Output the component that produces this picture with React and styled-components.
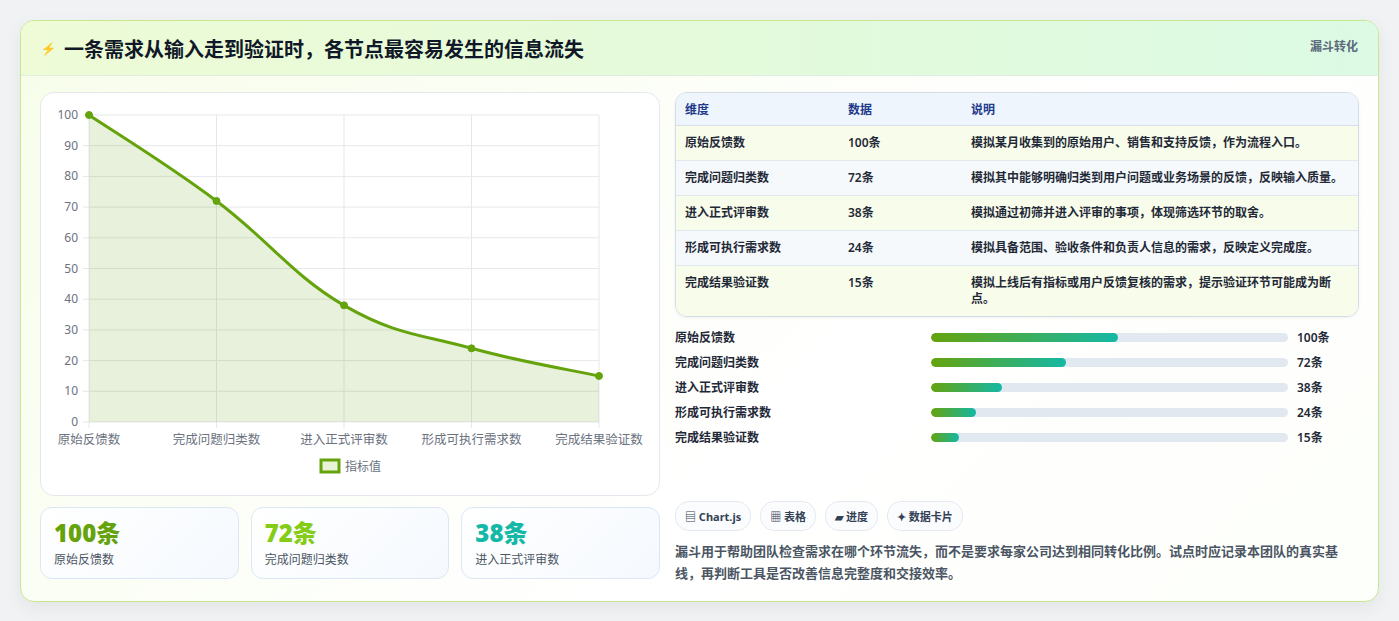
import React from "react";
import styled, { createGlobalStyle } from "styled-components";

const Global = createGlobalStyle`
  body { margin: 0; background: #f1f2f4; font-family: "Noto Sans", "Noto Sans CJK SC", sans-serif; }
`;

const Page = styled.div`
  padding: 20px 20px 22px 20px;
`;
const Card = styled.div`
  border: 1px solid #c7e88f;
  border-radius: 14px;
  background: linear-gradient(135deg, #f7fdea 0%, #ffffff 60%, #fdfffa 100%);
  box-shadow: 0 6px 18px rgba(0,0,0,0.06);
  overflow: hidden;
`;
const Header = styled.div`
  height: 54px;
  display: flex;
  align-items: center;
  justify-content: space-between;
  padding: 0 20px;
  background: linear-gradient(90deg, #eefbd6 0%, #e2fadc 60%, #dcfae4 100%);
  border-bottom: 1px solid #dfeede;
`;
const Title = styled.h2`
  margin: 0;
  font-size: 20px;
  font-weight: 700;
  color: #111827;
  display: flex;
  align-items: center;
  gap: 8px;
`;
const Tag = styled.span`
  font-size: 12px;
  font-weight: 700;
  color: #5b6b7c;
  align-self: flex-start;
  margin-top: 16px;
`;
const Body = styled.div`
  display: grid;
  grid-template-columns: 620px 1fr;
  gap: 15px;
  padding: 16px 19px 17px 19px;
`;
const Col = styled.div`
  display: flex;
  flex-direction: column;
`;
const ChartCard = styled.div`
  height: 402px;
  border: 1px solid #e3e8ee;
  border-radius: 14px;
  background: #fff;
`;
const Stats = styled.div`
  display: grid;
  grid-template-columns: repeat(3, 1fr);
  gap: 12px;
  margin-top: 11px;
`;
const Stat = styled.div`
  height: 72px;
  box-sizing: border-box;
  border: 1px solid #dbe7f5;
  border-radius: 12px;
  background: linear-gradient(135deg, #ffffff, #f5f9fe);
  padding: 11px 13px;
`;
const StatNum = styled.div`
  font-size: 24px;
  font-weight: 900;
  line-height: 28px;
  color: ${p => p.c};
`;
const StatLabel = styled.div`
  font-size: 12px;
  color: #4b5563;
  margin-top: 3px;
`;
const Table = styled.table`
  width: 100%;
  border-collapse: separate;
  border-spacing: 0;
  border: 1px solid #d4dce6;
  border-radius: 12px;
  overflow: hidden;
  font-size: 12px;
  box-shadow: 0 1px 3px rgba(0,0,0,0.06);
`;
const Th = styled.th`
  text-align: left;
  font-weight: 700;
  color: #1e3a8a;
  background: #eef5fc;
  height: 32px;
  padding: 0 9px;
  border-bottom: 1px solid #d7e0ea;
`;
const Td = styled.td`
  padding: 9px 9px;
  height: 16px;
  color: #1f2937;
  font-weight: 600;
  line-height: 16px;
  background: ${p => (p.alt ? "#f6f9fb" : "#f8fceb")};
  border-bottom: ${p => (p.last ? "none" : "1px solid #e1e8ee")};
  vertical-align: top;
`;
const Bars = styled.div`
  display: flex;
  flex-direction: column;
  gap: 9px;
  margin-top: 11px;
`;
const BarRow = styled.div`
  display: grid;
  grid-template-columns: 247px 357px 1fr;
  gap: 9px;
  align-items: center;
  font-size: 12px;
  font-weight: 600;
  color: #1f2937;
  height: 16px;
`;
const Track = styled.div`
  height: 9px;
  border-radius: 5px;
  background: #e2e8f0;
  overflow: hidden;
`;
const Fill = styled.div`
  height: 100%;
  border-radius: 5px;
  background: linear-gradient(90deg, #65a30d, #14b8a6);
`;
const Chips = styled.div`
  display: flex;
  gap: 9px;
  margin-top: 57px;
`;
const Chip = styled.span`
  font-size: 11px;
  font-weight: 700;
  color: #334155;
  border: 1px solid #e5e9ef;
  background: #fbfcfe;
  border-radius: 14px;
  padding: 6px 9px;
`;
const Note = styled.p`
  margin: 9px 0 0;
  font-size: 13px;
  line-height: 22px;
  font-weight: 600;
  color: #4b5563;
`;

const data = [
  ["原始反馈数", 100, "模拟某月收集到的原始用户、销售和支持反馈，作为流程入口。"],
  ["完成问题归类数", 72, "模拟其中能够明确归类到用户问题或业务场景的反馈，反映输入质量。"],
  ["进入正式评审数", 38, "模拟通过初筛并进入评审的事项，体现筛选环节的取舍。"],
  ["形成可执行需求数", 24, "模拟具备范围、验收条件和负责人信息的需求，反映定义完成度。"],
  ["完成结果验证数", 15, "模拟上线后有指标或用户反馈复核的需求，提示验证环节可能成为断点。"],
];

function Chart() {
  const X0 = 48, X1 = 558, Y0 = 22, Y1 = 329;
  const pts = data.map((d, i) => [X0 + i * (X1 - X0) / 4, Y1 - d[1] * (Y1 - Y0) / 100]);
  let path = `M${pts[0][0]},${pts[0][1]}`;
  for (let i = 0; i < pts.length - 1; i++) {
    const p0 = pts[i - 1] || pts[i], p1 = pts[i], p2 = pts[i + 1], p3 = pts[i + 2] || p2;
    const t = 0.2;
    const c1 = [p1[0] + (p2[0] - p0[0]) * t, p1[1] + (p2[1] - p0[1]) * t];
    const c2 = [p2[0] - (p3[0] - p1[0]) * t, p2[1] - (p3[1] - p1[1]) * t];
    path += ` C${c1[0]},${c1[1]} ${c2[0]},${c2[1]} ${p2[0]},${p2[1]}`;
  }
  const area = `${path} L${X1},${Y1} L${X0},${Y1} Z`;
  const ticks = [0, 10, 20, 30, 40, 50, 60, 70, 80, 90, 100];
  return (
    <svg width="619" height="402" style={{ display: "block" }} fontFamily="Noto Sans, Noto Sans CJK SC, sans-serif">
      {ticks.map(t => {
        const y = Y1 - t * (Y1 - Y0) / 100;
        return (
          <g key={t}>
            <line x1={X0 - 6} x2={X1} y1={y} y2={y} stroke="#e5e7eb" />
            <text x={X0 - 11} y={y + 4} fontSize="12" fill="#6b7280" textAnchor="end">{t}</text>
          </g>
        );
      })}
      {pts.map((p, i) => (
        <g key={i}>
          <line x1={p[0]} x2={p[0]} y1={Y0} y2={Y1 + 6} stroke="#e5e7eb" />
          <text x={p[0]} y={Y1 + 22} fontSize="12.5" fill="#6b7280" textAnchor="middle">{data[i][0]}</text>
        </g>
      ))}
      <path d={area} fill="rgba(101,163,13,0.15)" />
      <path d={path} fill="none" stroke="#65a30d" strokeWidth="3" />
      {pts.map((p, i) => (
        <circle key={i} cx={p[0]} cy={p[1]} r="3.5" fill="#65a30d" stroke="#65a30d" />
      ))}
      <rect x="280" y="367" width="18" height="12" fill="#e8f3d8" stroke="#65a30d" strokeWidth="3" />
      <text x="304" y="378" fontSize="12" fill="#6b7280">指标值</text>
    </svg>
  );
}

export default function App() {
  return (
    <Page>
      <Global />
      <Card>
        <Header>
          <Title><span style={{ fontSize: 12, color: "#3b82f6" }}>⚡</span>一条需求从输入走到验证时，各节点最容易发生的信息流失</Title>
          <Tag>漏斗转化</Tag>
        </Header>
        <Body>
          <Col>
            <ChartCard><Chart /></ChartCard>
            <Stats>
              <Stat><StatNum c="#65a30d">100条</StatNum><StatLabel>原始反馈数</StatLabel></Stat>
              <Stat><StatNum c="#84cc16">72条</StatNum><StatLabel>完成问题归类数</StatLabel></Stat>
              <Stat><StatNum c="#14b8a6">38条</StatNum><StatLabel>进入正式评审数</StatLabel></Stat>
            </Stats>
          </Col>
          <Col>
            <Table>
              <thead>
                <tr><Th style={{ width: 145 }}>维度</Th><Th style={{ width: 105 }}>数据</Th><Th>说明</Th></tr>
              </thead>
              <tbody>
                {data.map((d, i) => (
                  <tr key={i}>
                    <Td alt={i % 2 === 1} last={i === 4}>{d[0]}</Td>
                    <Td alt={i % 2 === 1} last={i === 4}>{d[1]}条</Td>
                    <Td alt={i % 2 === 1} last={i === 4}>{d[2]}</Td>
                  </tr>
                ))}
              </tbody>
            </Table>
            <Bars>
              {data.map((d, i) => (
                <BarRow key={i}>
                  <span>{d[0]}</span>
                  <Track><Fill style={{ width: `${d[1] * 0.525}%` }} /></Track>
                  <span>{d[1]}条</span>
                </BarRow>
              ))}
            </Bars>
            <Chips>
              <Chip>▤ Chart.js</Chip>
              <Chip>▦ 表格</Chip>
              <Chip>▰ 进度</Chip>
              <Chip>✦ 数据卡片</Chip>
            </Chips>
            <Note>漏斗用于帮助团队检查需求在哪个环节流失，而不是要求每家公司达到相同转化比例。试点时应记录本团队的真实基线，再判断工具是否改善信息完整度和交接效率。</Note>
          </Col>
        </Body>
      </Card>
    </Page>
  );
}
